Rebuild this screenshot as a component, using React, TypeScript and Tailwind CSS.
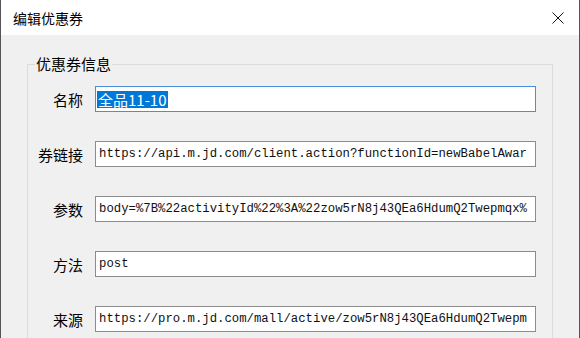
import React from "react";

const mono = { fontFamily: '"Liberation Mono", "DejaVu Sans Mono", monospace' };

const rows = [
  { label: "券链接", value: "https://api.m.jd.com/client.action?functionId=newBabelAwar" },
  { label: "参数", value: "body=%7B%22activityId%22%3A%22zow5rN8j43QEa6HdumQ2Twepmqx%" },
  { label: "方法", value: "post" },
  { label: "来源", value: "https://pro.m.jd.com/mall/active/zow5rN8j43QEa6HdumQ2Twepm" },
];

export default function App() {
  return (
    <div className="w-[580px] h-[338px] overflow-hidden flex flex-col border-x border-[#555555] font-['Noto_Sans_CJK_SC',sans-serif] text-black">
      {/* title bar */}
      <div className="h-[35px] shrink-0 bg-white flex items-center justify-between pl-[12px] pr-[15px]">
        <span className="text-[14px] leading-none">编辑优惠券</span>
        <svg width="12" height="12" viewBox="0 0 12 12">
          <path d="M0.5 0.5 L11.5 11.5 M11.5 0.5 L0.5 11.5" stroke="#111" strokeWidth="1" />
        </svg>
      </div>

      {/* body */}
      <div className="flex-1 bg-[#f0f0f0] pl-[26px] pt-[29px]">
        <div className="relative w-[526px] h-[300px] border border-[#dcdcdc] pt-[21px]">
          <span className="absolute left-[7px] top-[-10px] bg-[#f0f0f0] px-[1px] text-[15px] leading-[18px]">
            优惠券信息
          </span>
          <div className="grid grid-cols-[55px_441px] gap-x-[12px] gap-y-[29px] items-center">
            <span className="text-right text-[15px] leading-none">名称</span>
            <div className="h-[26px] border border-[#4a90d9] bg-white flex items-center pl-[1px] overflow-hidden">
              <span className="bg-[#0078d7] text-white text-[15px] leading-[17px] px-[1px]">全品11-10</span>
            </div>
            {rows.map((r) => (
              <React.Fragment key={r.label}>
                <span className="text-right text-[15px] leading-none">{r.label}</span>
                <div className="h-[26px] border border-[#8c8c8c] bg-white flex items-center pl-[3px] overflow-hidden whitespace-nowrap">
                  <span className="text-[12.3px] leading-none text-[#111]" style={mono}>
                    {r.value}
                  </span>
                </div>
              </React.Fragment>
            ))}
          </div>
        </div>
      </div>
    </div>
  );
}
